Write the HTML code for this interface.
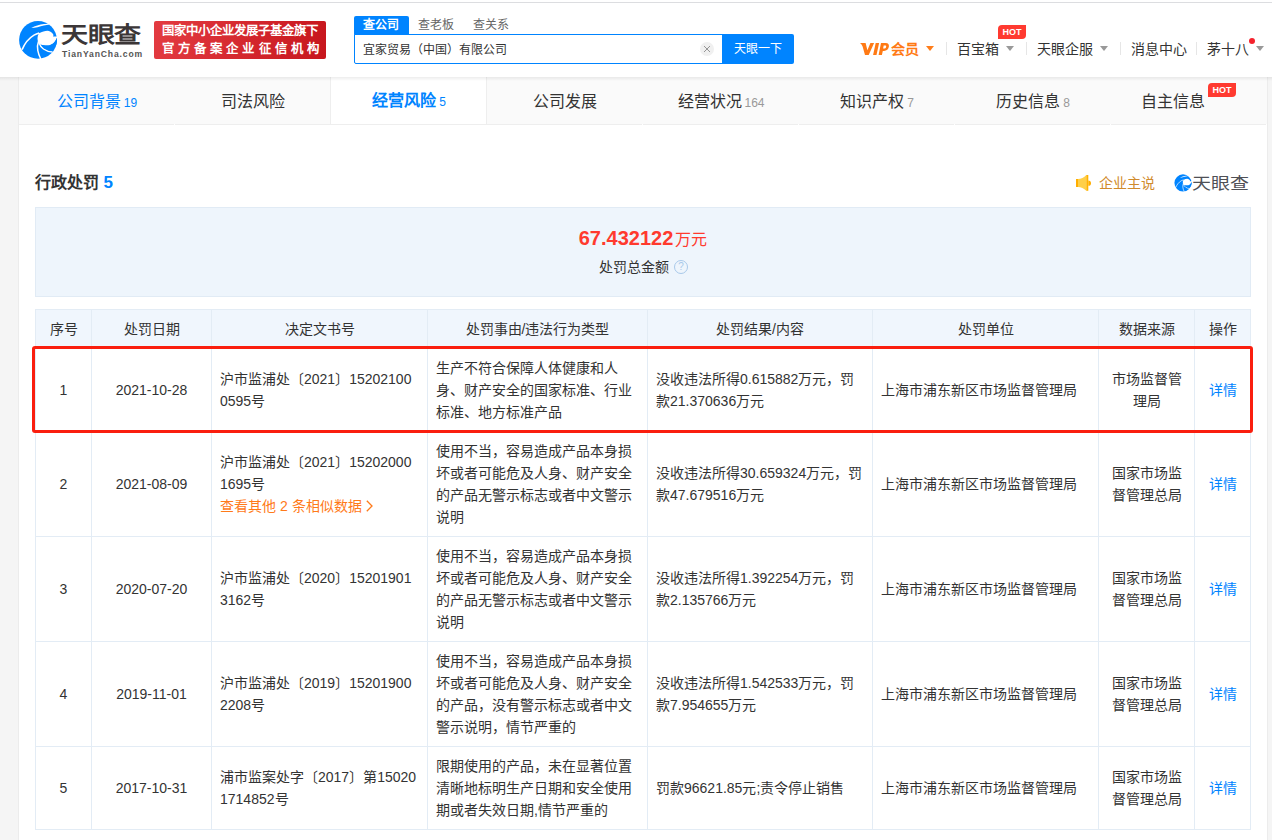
<!DOCTYPE html><html lang="zh-CN"><head><meta charset="utf-8"><style>
*{box-sizing:border-box}
html,body{margin:0;padding:0}
body{width:1272px;height:840px;overflow:hidden;position:relative;background:#f5f5f5;font-family:"Liberation Sans",sans-serif;font-size:14px;color:#333}
.a{position:absolute}
.nw{white-space:nowrap}
.cell{position:absolute;display:flex;align-items:center;line-height:22px;white-space:nowrap}
.c{justify-content:center;text-align:center}
.l{justify-content:flex-start;text-align:left;padding-left:8px}
.hl{background:#e3ecf5}
</style></head><body>
<div class="a" style="left:0;top:0;width:1272px;height:77px;background:#fff"></div>
<div class="a" style="left:0;top:2px;width:1272px;height:1px;background:#dcdde0"></div>
<svg class="a" style="left:16px;top:18px" width="44" height="44" viewBox="0 0 44 44"><circle cx="22" cy="21.9" r="18.9" fill="#0084ff"/>
<path d="M15.3,9.9 C19,8 23.5,6.6 28,6.1 L33.5,5.8 L33.5,6.6 C30,7 26,8.2 21.5,9.3 C19.5,9.7 17.3,9.9 15.3,9.9Z" fill="#fff"/>
<path d="M23,15.2 C26,13.8 29,12.8 31.4,12.8 C33.5,12.9 35.8,14.2 37,16 C37.6,17 37.6,17.8 36.9,18.4 L42,18.4 L42,20.3 L40.6,19.9 C40.2,21.5 38.8,24.5 36.7,25.7 C34.8,27 32.8,27.5 31,27.5 C28.8,27.5 26.5,27.2 25.1,26.7 L23.5,25.2 C22.2,24 21.5,22.5 21.5,20.5 C21.5,18.5 22,17 23,15.2Z" fill="#fff"/>
<path d="M6.1,31.6 C8.5,26 12.5,20.5 18,17.2 C19.6,16.3 21.3,15.6 23.2,15" stroke="#fff" stroke-width="1.5" fill="none"/>
<path d="M22.6,23 C21.5,26 21.2,29.5 21.8,32.5 C22.3,35.5 23.4,38.2 24.8,41" stroke="#fff" stroke-width="1.5" fill="none"/>
<path d="M22.8,24.2 C23.8,27 25.3,29.5 27.5,31 C30,32.8 33,33.8 36.5,34.1" stroke="#fff" stroke-width="1.5" fill="none"/>
<path d="M25.1,26.7 C26.5,27.2 28.8,27.5 31,27.5 C32.8,27.5 34.8,27 36.7,25.7 C38.8,24.5 40.2,21.5 40.6,19.9 C41.2,21.5 41.2,24 40.5,26 C39.8,28.5 38.2,30.3 36.5,31.2 C34.5,32 32,32 29.5,31 C27.5,30 26,28.5 25.1,26.7Z" fill="#0084ff"/></svg>
<div class="a nw" style="left:61px;top:17px;font-size:27px;line-height:34px;font-weight:bold;color:#3b3637;letter-spacing:-0.5px;transform:scaleY(0.82);transform-origin:0 0;margin-top:4px">天眼查</div>
<div class="a nw" style="left:62px;top:49px;font-size:8.6px;line-height:10px;font-weight:bold;color:#555;letter-spacing:0.85px">TianYanCha.com</div>
<div class="a" style="left:154px;top:21px;width:172px;height:38px;border-radius:2px;background:linear-gradient(100deg,#e33b41,#c7161d)"></div>
<div class="a nw" style="left:162px;top:23px;font-size:12.4px;line-height:17px;color:#fff;letter-spacing:0px;font-weight:bold">国家中小企业发展子基金旗下</div>
<div class="a nw" style="left:162px;top:41px;font-size:12.4px;line-height:17px;color:#fff;letter-spacing:4.1px;font-weight:bold">官方备案企业征信机构</div>
<div class="a" style="left:354px;top:16px;width:55px;height:19px;background:#0084ff;border-radius:2px 2px 0 0"></div>
<div class="a nw" style="left:363px;top:16px;font-size:12px;line-height:18px;color:#fff;font-weight:bold">查公司</div>
<div class="a nw" style="left:418px;top:16px;font-size:12px;line-height:18px;color:#666">查老板</div>
<div class="a nw" style="left:473px;top:16px;font-size:12px;line-height:18px;color:#666">查关系</div>
<div class="a" style="left:354px;top:34px;width:370px;height:30px;border:1px solid #0084ff;border-radius:0 0 0 2px;background:#fff"></div>
<div class="a nw" style="left:363px;top:42px;font-size:12px;line-height:16px;color:#333">宜家贸易（中国）有限公司</div>
<div class="a" style="left:700px;top:42px;width:14px;height:14px;border-radius:50%;background:#f0f0f0"></div>
<svg class="a" style="left:704px;top:46px" width="6" height="6" viewBox="0 0 6 6"><path d="M0,0L6,6M6,0L0,6" stroke="#8a8a8a" stroke-width="0.9"/></svg>
<div class="a" style="left:722px;top:34px;width:72px;height:30px;background:#0084ff;border-radius:0 2px 2px 0"></div>
<div class="a nw" style="left:734px;top:40px;font-size:12px;line-height:18px;color:#fff">天眼一下</div>
<svg class="a" style="left:856px;top:38px" width="40" height="20" viewBox="0 0 40 20"><g fill="#ff7a14">
<path d="M4,5 L9.6,5 L11.4,12.3 L14.4,5 L18.1,5 L12.7,17 L9,17 L6.6,8.4 C6,7 5.2,6 4,5Z"/>
<path d="M19.7,5 L23.1,5 L20.5,17 L17.1,17Z"/>
<path fill-rule="evenodd" d="M25,5 L29.6,5 C32.4,5 33.1,6.8 32.9,8.6 C32.6,11.2 30.6,12.9 28,12.9 L26.8,12.9 L25.9,17 L22.6,17Z M27.7,7.4 L29.2,7.4 C30.1,7.4 30.3,8 30.2,8.7 C30,9.8 29.4,10.5 28.4,10.5 L27.1,10.5Z"/>
</g></svg>
<div class="a nw" style="left:891px;top:40px;font-size:14px;line-height:18px;color:#ff7a14;font-weight:bold">会员</div>
<div class="a" style="left:926px;top:46px;width:0;height:0;border-left:4px solid transparent;border-right:4px solid transparent;border-top:5px solid #ff7d1a"></div>
<div class="a" style="left:946px;top:42px;width:1px;height:13px;background:#e6e6e6"></div>
<div class="a nw" style="left:957px;top:40px;font-size:14px;line-height:18px;color:#333">百宝箱</div>
<div class="a" style="left:1006px;top:46px;width:0;height:0;border-left:4px solid transparent;border-right:4px solid transparent;border-top:5px solid #999"></div>
<div class="a" style="left:998px;top:25px;width:28px;height:14px;background:#ff3a30;border-radius:4px 0 4px 0"></div>
<div class="a nw" style="left:998px;top:25px;width:28px;text-align:center;font-size:9px;line-height:14px;color:#fff;font-weight:bold">HOT</div>
<div class="a" style="left:1026px;top:42px;width:1px;height:13px;background:#e6e6e6"></div>
<div class="a nw" style="left:1037px;top:40px;font-size:14px;line-height:18px;color:#333">天眼企服</div>
<div class="a" style="left:1100px;top:46px;width:0;height:0;border-left:4px solid transparent;border-right:4px solid transparent;border-top:5px solid #999"></div>
<div class="a" style="left:1120px;top:42px;width:1px;height:13px;background:#e6e6e6"></div>
<div class="a nw" style="left:1131px;top:40px;font-size:14px;line-height:18px;color:#333">消息中心</div>
<div class="a" style="left:1196px;top:42px;width:1px;height:13px;background:#e6e6e6"></div>
<div class="a nw" style="left:1207px;top:40px;font-size:14px;line-height:18px;color:#333">茅十八</div>
<div class="a" style="left:1249px;top:38px;width:6px;height:6px;border-radius:50%;background:#f5222d"></div>
<div class="a" style="left:1256px;top:46px;width:0;height:0;border-left:4px solid transparent;border-right:4px solid transparent;border-top:5px solid #999"></div>
<div class="a" style="left:18px;top:77px;width:1250px;height:763px;background:#fff;border-left:1px solid #ececec;border-right:1px solid #ececec"></div>
<div class="a" style="left:19px;top:77px;width:1248px;height:47px;background:#fafafa"></div>
<div class="a" style="left:19px;top:77px;width:155px;height:48px;background:transparent;border-bottom:1px solid #eeeeee"></div>
<div class="a nw" style="left:19px;top:91px;width:156px;text-align:center;font-size:16px;line-height:22px;color:#0084ff;font-weight:normal">公司背景 <span style="font-size:12px;color:#0084ff;margin-left:-1.5px;font-weight:normal">19</span></div>
<div class="a" style="left:175px;top:77px;width:155px;height:48px;background:transparent;border-bottom:1px solid #eeeeee"></div>
<div class="a nw" style="left:175px;top:91px;width:156px;text-align:center;font-size:16px;line-height:22px;color:#333;font-weight:normal">司法风险</div>
<div class="a" style="left:331px;top:77px;width:155px;height:48px;background:#fff;border-bottom:1px solid #eeeeee"></div>
<div class="a" style="left:330px;top:77px;width:1px;height:48px;background:#eeeeee"></div>
<div class="a" style="left:486px;top:77px;width:1px;height:48px;background:#eeeeee"></div>
<div class="a nw" style="left:331px;top:90px;width:156px;text-align:center;font-size:16px;line-height:22px;color:#0084ff;font-weight:bold">经营风险 <span style="font-size:12px;color:#0084ff;margin-left:-1.5px;font-weight:normal">5</span></div>
<div class="a" style="left:487px;top:77px;width:155px;height:48px;background:transparent;border-bottom:1px solid #eeeeee"></div>
<div class="a nw" style="left:487px;top:91px;width:156px;text-align:center;font-size:16px;line-height:22px;color:#333;font-weight:normal">公司发展</div>
<div class="a" style="left:643px;top:77px;width:155px;height:48px;background:transparent;border-bottom:1px solid #eeeeee"></div>
<div class="a nw" style="left:643px;top:91px;width:156px;text-align:center;font-size:16px;line-height:22px;color:#333;font-weight:normal">经营状况 <span style="font-size:12px;color:#999;margin-left:-1.5px;font-weight:normal">164</span></div>
<div class="a" style="left:799px;top:77px;width:155px;height:48px;background:transparent;border-bottom:1px solid #eeeeee"></div>
<div class="a nw" style="left:799px;top:91px;width:156px;text-align:center;font-size:16px;line-height:22px;color:#333;font-weight:normal">知识产权 <span style="font-size:12px;color:#999;margin-left:-1.5px;font-weight:normal">7</span></div>
<div class="a" style="left:955px;top:77px;width:155px;height:48px;background:transparent;border-bottom:1px solid #eeeeee"></div>
<div class="a nw" style="left:955px;top:91px;width:156px;text-align:center;font-size:16px;line-height:22px;color:#333;font-weight:normal">历史信息 <span style="font-size:12px;color:#999;margin-left:-1.5px;font-weight:normal">8</span></div>
<div class="a" style="left:1111px;top:77px;width:155px;height:48px;background:transparent;border-bottom:1px solid #eeeeee"></div>
<div class="a nw" style="left:1111px;top:91px;width:124px;text-align:center;font-size:16px;line-height:22px;color:#333;font-weight:normal">自主信息</div>
<div class="a" style="left:1208px;top:83px;width:28px;height:14px;background:#ff3a30;border-radius:4px 0 4px 0"></div>
<div class="a nw" style="left:1208px;top:83px;width:28px;text-align:center;font-size:9px;line-height:14px;color:#fff;font-weight:bold">HOT</div>
<div class="a" style="left:0;top:77px;width:1272px;height:4px;background:linear-gradient(rgba(0,0,0,0.07),rgba(0,0,0,0))"></div>
<div class="a nw" style="left:35px;top:172px;font-size:16px;line-height:22px;font-weight:bold;color:#333">行政处罚 <span style="color:#0084ff;font-size:17px">5</span></div>
<svg class="a" style="left:1070px;top:170px" width="24" height="26" viewBox="0 0 24 26">
<rect x="6" y="9" width="2" height="8" fill="#ffae00"/>
<path d="M8,9 C11,9 14,7.5 16.3,5 L16.3,20.8 C14,18.5 11,17 8,17Z" fill="#ffcf48"/>
<rect x="16.3" y="5" width="2" height="15.8" fill="#ffb300"/>
<path d="M18.3,10.5 A2.6,2.6 0 0 1 18.3,15.8Z" fill="#ffae00"/>
</svg>
<div class="a nw" style="left:1099px;top:173px;font-size:14px;line-height:20px;color:#d08a2b">企业主说</div>
<svg class="a" style="left:1173px;top:172.5px" width="20" height="20" viewBox="0 0 44 44"><circle cx="22" cy="21.9" r="18.9" fill="#0084ff"/>
<path d="M15.3,9.9 C19,8 23.5,6.6 28,6.1 L33.5,5.8 L33.5,6.6 C30,7 26,8.2 21.5,9.3 C19.5,9.7 17.3,9.9 15.3,9.9Z" fill="#fff"/>
<path d="M23,15.2 C26,13.8 29,12.8 31.4,12.8 C33.5,12.9 35.8,14.2 37,16 C37.6,17 37.6,17.8 36.9,18.4 L42,18.4 L42,20.3 L40.6,19.9 C40.2,21.5 38.8,24.5 36.7,25.7 C34.8,27 32.8,27.5 31,27.5 C28.8,27.5 26.5,27.2 25.1,26.7 L23.5,25.2 C22.2,24 21.5,22.5 21.5,20.5 C21.5,18.5 22,17 23,15.2Z" fill="#fff"/>
<path d="M6.1,31.6 C8.5,26 12.5,20.5 18,17.2 C19.6,16.3 21.3,15.6 23.2,15" stroke="#fff" stroke-width="1.5" fill="none"/>
<path d="M22.6,23 C21.5,26 21.2,29.5 21.8,32.5 C22.3,35.5 23.4,38.2 24.8,41" stroke="#fff" stroke-width="1.5" fill="none"/>
<path d="M22.8,24.2 C23.8,27 25.3,29.5 27.5,31 C30,32.8 33,33.8 36.5,34.1" stroke="#fff" stroke-width="1.5" fill="none"/>
<path d="M25.1,26.7 C26.5,27.2 28.8,27.5 31,27.5 C32.8,27.5 34.8,27 36.7,25.7 C38.8,24.5 40.2,21.5 40.6,19.9 C41.2,21.5 41.2,24 40.5,26 C39.8,28.5 38.2,30.3 36.5,31.2 C34.5,32 32,32 29.5,31 C27.5,30 26,28.5 25.1,26.7Z" fill="#0084ff"/></svg>
<div class="a nw" style="left:1192px;top:172px;font-size:19px;line-height:24px;font-weight:500;color:#4f5056;letter-spacing:-0.2px;transform:scaleY(0.84);transform-origin:0 50%">天眼查</div>
<div class="a" style="left:35px;top:207px;width:1216px;height:90px;background:#eef5fc;border:1px solid #e1ebf5"></div>
<div class="a nw" style="left:35px;top:225px;width:1216px;text-align:center;line-height:26px;color:#ff3a2e;font-weight:bold"><span style="font-size:20px">67.432122</span><span style="font-size:16px;margin-left:2px;font-weight:500">万元</span></div>
<div class="a nw" style="left:599px;top:257px;font-size:14px;line-height:20px;color:#333">处罚总金额</div>
<div class="a" style="left:674px;top:260px;width:14px;height:14px;border-radius:50%;border:1px solid #a9c9ea;color:#a9c9ea;font-size:10px;line-height:12px;text-align:center">?</div>
<div class="a" style="left:35px;top:309px;width:1216px;height:38px;background:#f0f6fd"></div>
<div class="a hl" style="left:35px;top:309px;width:1px;height:521px"></div>
<div class="a hl" style="left:91px;top:309px;width:1px;height:521px"></div>
<div class="a hl" style="left:211px;top:309px;width:1px;height:521px"></div>
<div class="a hl" style="left:427px;top:309px;width:1px;height:521px"></div>
<div class="a hl" style="left:647px;top:309px;width:1px;height:521px"></div>
<div class="a hl" style="left:872px;top:309px;width:1px;height:521px"></div>
<div class="a hl" style="left:1098px;top:309px;width:1px;height:521px"></div>
<div class="a hl" style="left:1194px;top:309px;width:1px;height:521px"></div>
<div class="a hl" style="left:1250px;top:309px;width:1px;height:521px"></div>
<div class="a hl" style="left:35px;top:309px;width:1216px;height:1px"></div>
<div class="a hl" style="left:35px;top:346px;width:1216px;height:1px"></div>
<div class="a hl" style="left:35px;top:431px;width:1216px;height:1px"></div>
<div class="a hl" style="left:35px;top:536px;width:1216px;height:1px"></div>
<div class="a hl" style="left:35px;top:641px;width:1216px;height:1px"></div>
<div class="a hl" style="left:35px;top:746px;width:1216px;height:1px"></div>
<div class="a hl" style="left:35px;top:829px;width:1216px;height:1px"></div>
<div class="cell c" style="left:36px;top:311px;width:55px;height:36px">序号</div>
<div class="cell c" style="left:92px;top:311px;width:119px;height:36px">处罚日期</div>
<div class="cell c" style="left:212px;top:311px;width:215px;height:36px">决定文书号</div>
<div class="cell c" style="left:428px;top:311px;width:219px;height:36px">处罚事由/违法行为类型</div>
<div class="cell c" style="left:648px;top:311px;width:224px;height:36px">处罚结果/内容</div>
<div class="cell c" style="left:873px;top:311px;width:225px;height:36px">处罚单位</div>
<div class="cell c" style="left:1099px;top:311px;width:95px;height:36px">数据来源</div>
<div class="cell c" style="left:1195px;top:311px;width:55px;height:36px">操作</div>
<div class="cell c" style="left:36px;top:348px;width:55px;height:84px"><div>1</div></div>
<div class="cell c" style="left:92px;top:348px;width:119px;height:84px"><div>2021-10-28</div></div>
<div class="cell l" style="left:212px;top:348px;width:215px;height:84px"><div>沪市监浦处〔2021〕15202100<br>0595号</div></div>
<div class="cell l" style="left:428px;top:348px;width:219px;height:84px"><div>生产不符合保障人体健康和人<br>身、财产安全的国家标准、行业<br>标准、地方标准产品</div></div>
<div class="cell l" style="left:648px;top:348px;width:224px;height:84px"><div>没收违法所得0.615882万元，罚<br>款21.370636万元</div></div>
<div class="cell l" style="left:873px;top:348px;width:225px;height:84px"><div>上海市浦东新区市场监督管理局</div></div>
<div class="cell c" style="left:1099px;top:348px;width:95px;height:84px"><div>市场监督管<br>理局</div></div>
<div class="cell c" style="left:1195px;top:348px;width:55px;height:84px"><div><span style="color:#0084ff">详情</span></div></div>
<div class="cell c" style="left:36px;top:432px;width:55px;height:104px"><div>2</div></div>
<div class="cell c" style="left:92px;top:432px;width:119px;height:104px"><div>2021-08-09</div></div>
<div class="cell l" style="left:212px;top:432px;width:215px;height:104px"><div>沪市监浦处〔2021〕15202000<br>1695号<br><span style="color:#ff7a1a">查看其他 2 条相似数据 <svg width="7" height="12" viewBox="0 0 7 12" style="vertical-align:-1px;margin-left:1px"><path d="M0.8,0.8 L6,6 L0.8,11.2" stroke="#ff7a1a" stroke-width="1.3" fill="none"/></svg></span></div></div>
<div class="cell l" style="left:428px;top:432px;width:219px;height:104px"><div>使用不当，容易造成产品本身损<br>坏或者可能危及人身、财产安全<br>的产品无警示标志或者中文警示<br>说明</div></div>
<div class="cell l" style="left:648px;top:432px;width:224px;height:104px"><div>没收违法所得30.659324万元，罚<br>款47.679516万元</div></div>
<div class="cell l" style="left:873px;top:432px;width:225px;height:104px"><div>上海市浦东新区市场监督管理局</div></div>
<div class="cell c" style="left:1099px;top:432px;width:95px;height:104px"><div>国家市场监<br>督管理总局</div></div>
<div class="cell c" style="left:1195px;top:432px;width:55px;height:104px"><div><span style="color:#0084ff">详情</span></div></div>
<div class="cell c" style="left:36px;top:537px;width:55px;height:104px"><div>3</div></div>
<div class="cell c" style="left:92px;top:537px;width:119px;height:104px"><div>2020-07-20</div></div>
<div class="cell l" style="left:212px;top:537px;width:215px;height:104px"><div>沪市监浦处〔2020〕15201901<br>3162号</div></div>
<div class="cell l" style="left:428px;top:537px;width:219px;height:104px"><div>使用不当，容易造成产品本身损<br>坏或者可能危及人身、财产安全<br>的产品无警示标志或者中文警示<br>说明</div></div>
<div class="cell l" style="left:648px;top:537px;width:224px;height:104px"><div>没收违法所得1.392254万元，罚<br>款2.135766万元</div></div>
<div class="cell l" style="left:873px;top:537px;width:225px;height:104px"><div>上海市浦东新区市场监督管理局</div></div>
<div class="cell c" style="left:1099px;top:537px;width:95px;height:104px"><div>国家市场监<br>督管理总局</div></div>
<div class="cell c" style="left:1195px;top:537px;width:55px;height:104px"><div><span style="color:#0084ff">详情</span></div></div>
<div class="cell c" style="left:36px;top:642px;width:55px;height:104px"><div>4</div></div>
<div class="cell c" style="left:92px;top:642px;width:119px;height:104px"><div>2019-11-01</div></div>
<div class="cell l" style="left:212px;top:642px;width:215px;height:104px"><div>沪市监浦处〔2019〕15201900<br>2208号</div></div>
<div class="cell l" style="left:428px;top:642px;width:219px;height:104px"><div>使用不当，容易造成产品本身损<br>坏或者可能危及人身、财产安全<br>的产品，没有警示标志或者中文<br>警示说明，情节严重的</div></div>
<div class="cell l" style="left:648px;top:642px;width:224px;height:104px"><div>没收违法所得1.542533万元，罚<br>款7.954655万元</div></div>
<div class="cell l" style="left:873px;top:642px;width:225px;height:104px"><div>上海市浦东新区市场监督管理局</div></div>
<div class="cell c" style="left:1099px;top:642px;width:95px;height:104px"><div>国家市场监<br>督管理总局</div></div>
<div class="cell c" style="left:1195px;top:642px;width:55px;height:104px"><div><span style="color:#0084ff">详情</span></div></div>
<div class="cell c" style="left:36px;top:747px;width:55px;height:82px"><div>5</div></div>
<div class="cell c" style="left:92px;top:747px;width:119px;height:82px"><div>2017-10-31</div></div>
<div class="cell l" style="left:212px;top:747px;width:215px;height:82px"><div>浦市监案处字〔2017〕第15020<br>1714852号</div></div>
<div class="cell l" style="left:428px;top:747px;width:219px;height:82px"><div>限期使用的产品，未在显著位置<br>清晰地标明生产日期和安全使用<br>期或者失效日期,情节严重的</div></div>
<div class="cell l" style="left:648px;top:747px;width:224px;height:82px"><div>罚款96621.85元;责令停止销售</div></div>
<div class="cell l" style="left:873px;top:747px;width:225px;height:82px"><div>上海市浦东新区市场监督管理局</div></div>
<div class="cell c" style="left:1099px;top:747px;width:95px;height:82px"><div>国家市场监<br>督管理总局</div></div>
<div class="cell c" style="left:1195px;top:747px;width:55px;height:82px"><div><span style="color:#0084ff">详情</span></div></div>
<div class="a" style="left:32px;top:346px;width:1221px;height:87px;border:3px solid #fa1e0e;border-radius:3px"></div>
</body></html>
